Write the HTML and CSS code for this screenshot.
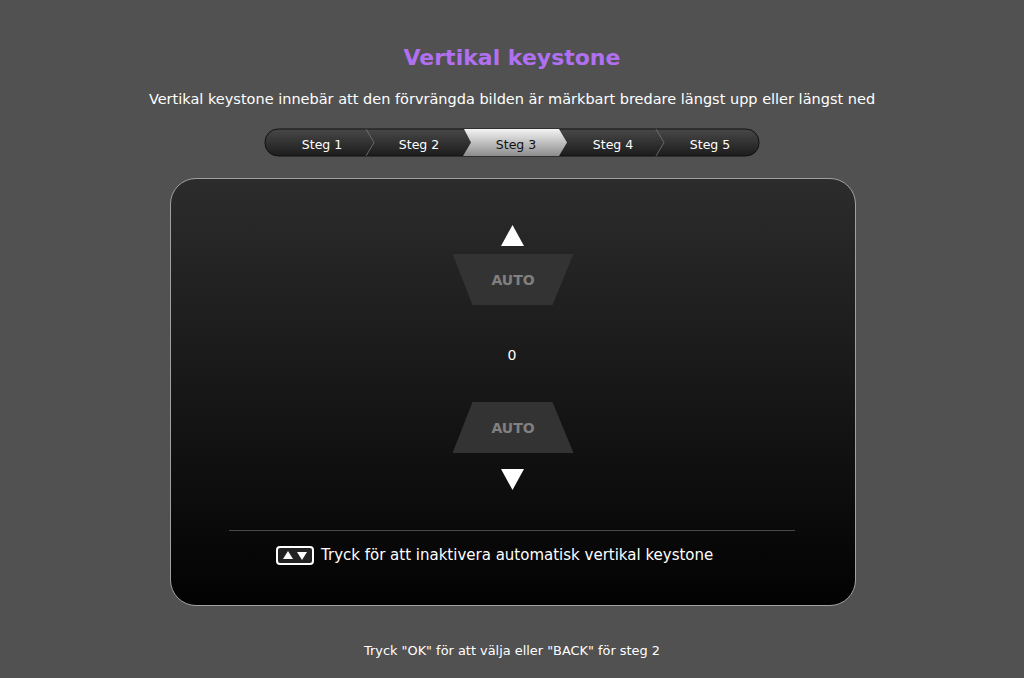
FILE: index.html
```html
<!DOCTYPE html>
<html lang="sv">
  <head>
    <meta charset="UTF-8" />
    <title>Vertikal keystone</title>
    <link rel="stylesheet" href="styles.css">
  </head>
  <body>
    <h1 class="title">Vertikal keystone</h1>
    <p class="intro">Vertikal keystone innebär att den förvrängda bilden är märkbart bredare längst upp eller längst ned</p>

    <div class="steps">
      <svg class="steps-bg" width="497" height="30" viewBox="0 0 497 30">
        <defs>
          <linearGradient id="bar" x1="0" y1="0" x2="0" y2="1">
            <stop offset="0" stop-color="#484848" />
            <stop offset="1" stop-color="#1c1c1c" />
          </linearGradient>
          <linearGradient id="on" x1="0" y1="0" x2="0" y2="1">
            <stop offset="0" stop-color="#f4f4f4" />
            <stop offset="1" stop-color="#8c8c8c" />
          </linearGradient>
        </defs>
        <rect x="1" y="1" width="494" height="27" rx="13" fill="url(#bar)" stroke="#111" />
        <polygon points="200,1 295,1 303,14.5 295,28 199,28 207,14.5" fill="url(#on)" />
        <path d="M102 1l8 13.500-8 13.500M392 1l8 13.500-8 13.500" fill="none" stroke="#777" stroke-width="0.8" />
      </svg>
      <span class="step">Steg 1</span>
      <span class="step">Steg 2</span>
      <span class="step active">Steg 3</span>
      <span class="step">Steg 4</span>
      <span class="step">Steg 5</span>
    </div>

    <div class="panel">
      <svg class="arrow" width="23" height="21" viewBox="0 0 23 21"><polygon points="11.500,0 23,21 0,21" /></svg>
      <div class="auto auto-up">AUTO</div>
      <div class="value">0</div>
      <div class="auto auto-down">AUTO</div>
      <svg class="arrow arrow-down" width="23" height="21" viewBox="0 0 23 21"><polygon points="0,0 23,0 11.500,21" /></svg>
      <div class="divider"></div>
      <div class="hint">
        <svg class="keys" width="38" height="19" viewBox="0 0 38 19">
          <rect x="1" y="1" width="36" height="17" rx="3" fill="#222" stroke="#fff" stroke-width="2" />
          <polygon points="12,5 17,13 7,13" fill="#fff" />
          <polygon points="21,6 31,6 26,14" fill="#fff" />
        </svg>
        <span class="hint-text">Tryck för att inaktivera automatisk vertikal keystone</span>
      </div>
    </div>

    <p class="footer">Tryck "OK" för att välja eller "BACK" för steg 2</p>
  </body>
</html>
```

FILE: styles.css
```css
* {
  margin: 0;
  padding: 0;
  box-sizing: border-box;
}

html,
body {
  height: 100%;
}

body {
  display: flex;
  flex-direction: column;
  align-items: center;
  overflow: hidden;
  background-color: #515151;
  color: #fff;
  font-family: "DejaVu Sans", "Liberation Sans", sans-serif;
}

.title {
  margin-top: 43px;
  height: 30px;
  line-height: 30px;
  font-size: 22px;
  font-weight: bold;
  color: #b070f0;
}

.intro {
  margin-top: 15px;
  height: 22px;
  line-height: 22px;
  font-size: 14.500px;
}

.steps {
  position: relative;
  display: flex;
  align-items: center;
  width: 497px;
  height: 30px;
  margin-top: 18px;
  padding: 2px 0 0 10px;
}

.steps-bg {
  position: absolute;
  left: 0;
  top: 0;
}

.step {
  position: relative;
  width: 97px;
  text-align: center;
  font-size: 12.500px;
}

.step.active {
  color: #111;
}

.panel {
  display: flex;
  flex-direction: column;
  align-items: center;
  width: 686px;
  height: 428px;
  margin: 20px 0 0 2px;
  padding-top: 46px;
  border: 1px solid #a0a0a0;
  border-radius: 26px;
  background: linear-gradient(#2c2c2c, #020202);
}

.arrow {
  display: block;
  margin-right: 2px;
  fill: #fff;
}

.arrow-down {
  margin-top: 16px;
}

.auto {
  display: flex;
  align-items: center;
  justify-content: center;
  width: 121px;
  height: 51px;
  background-color: #333;
  color: #808080;
  font-size: 14px;
  font-weight: bold;
}

.auto-up {
  margin-top: 8px;
  clip-path: polygon(0 0, 100% 0, 100px 100%, 20px 100%);
}

.auto-down {
  clip-path: polygon(20px 0, 100px 0, 100% 100%, 0 100%);
}

.value {
  height: 97px;
  margin-right: 2px;
  line-height: 100px;
  font-size: 14px;
}

.divider {
  width: 566px;
  height: 1px;
  margin: 40px 2px 0 0;
  background-color: #4a4a4a;
}

.hint {
  display: flex;
  align-items: center;
  gap: 7px;
  align-self: flex-start;
  margin: 15px 0 0 105px;
  font-size: 15px;
}

.hint-text {
  margin-top: -2px;
}

.keys {
  display: block;
}

.footer {
  margin-top: 37px;
  font-size: 12.900px;
}
```
